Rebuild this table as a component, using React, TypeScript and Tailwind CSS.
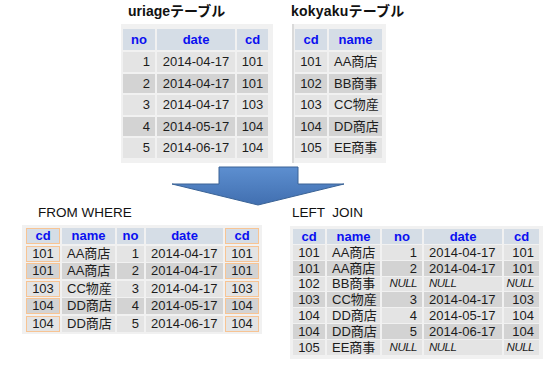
import React from "react";

type Align = "l" | "c" | "r";
type Col = { align: Align; orange?: boolean };
type TableSpec = {
  grid: string;
  gapY: string;
  headH: string;
  rowH: string;
  container: string;
  cols: Col[];
  header: string[];
  rows: string[][];
};

const justify: Record<Align, string> = {
  l: "justify-start pl-[5px]",
  c: "justify-center",
  r: "justify-end pr-[5px]",
};

function DataTable({ t }: { t: TableSpec }) {
  return (
    <div className={t.container}>
      <div className={`grid gap-x-[2px] ${t.grid} ${t.gapY}`}>
        {t.header.map((h, i) => (
          <div
            key={"h" + i}
            className={`${t.headH} flex items-center justify-center bg-[#d5dde6] text-[13px] font-bold text-[#0a10f0] ${
              t.cols[i].orange ? "border border-[#f7c494]" : ""
            }`}
          >
            {h}
          </div>
        ))}
        {t.rows.map((r, ri) =>
          r.map((v, ci) => {
            const col = t.cols[ci];
            const isNull = v === "NULL";
            return (
              <div
                key={ri + "-" + ci}
                className={`${t.rowH} flex items-center whitespace-nowrap ${
                  ri % 2 === 0 ? "bg-[#e4e4e4]" : "bg-[#d3d3d3]"
                } ${justify[col.align]} ${col.orange ? "border border-[#f7c494]" : ""} ${
                  isNull ? "italic text-[11.5px] tracking-[-0.5px]" : "text-[13px]"
                } text-[#1c1c1c]`}
              >
                {v}
              </div>
            );
          })
        )}
      </div>
    </div>
  );
}

const uriage: TableSpec = {
  grid: "grid-cols-[32px_78px_31px]",
  gapY: "gap-y-[2px]",
  headH: "h-[21px]",
  rowH: "h-[19.5px]",
  container: "bg-[#f1f1f1] pl-[2px] pr-[5px] pt-[5px] pb-[5.5px] w-fit",
  cols: [{ align: "r" }, { align: "c" }, { align: "c" }],
  header: ["no", "date", "cd"],
  rows: [
    ["1", "2014-04-17", "101"],
    ["2", "2014-04-17", "101"],
    ["3", "2014-04-17", "103"],
    ["4", "2014-05-17", "104"],
    ["5", "2014-06-17", "104"],
  ],
};

const kokyaku: TableSpec = {
  grid: "grid-cols-[32px_53px]",
  gapY: "gap-y-[2px]",
  headH: "h-[21px]",
  rowH: "h-[19.5px]",
  container:
    "bg-[#f1f1f1] border-l-[2px] border-[#dadada] pl-[1px] pr-[4px] pt-[5px] pb-[5.5px] w-fit",
  cols: [{ align: "c" }, { align: "l" }],
  header: ["cd", "name"],
  rows: [
    ["101", "AA商店"],
    ["102", "BB商事"],
    ["103", "CC物産"],
    ["104", "DD商店"],
    ["105", "EE商事"],
  ],
};

const fromWhere: TableSpec = {
  grid: "grid-cols-[34px_53px_27px_77px_34px]",
  gapY: "gap-y-[1.75px]",
  headH: "h-[16px]",
  rowH: "h-[15.75px]",
  container: "bg-[#f1f1f1] pl-[4px] pr-[3px] pt-[3px] pb-[2px] w-fit",
  cols: [
    { align: "c", orange: true },
    { align: "l" },
    { align: "r" },
    { align: "l" },
    { align: "c", orange: true },
  ],
  header: ["cd", "name", "no", "date", "cd"],
  rows: [
    ["101", "AA商店", "1", "2014-04-17", "101"],
    ["101", "AA商店", "2", "2014-04-17", "101"],
    ["103", "CC物産", "3", "2014-04-17", "103"],
    ["104", "DD商店", "4", "2014-05-17", "104"],
    ["104", "DD商店", "5", "2014-06-17", "104"],
  ],
};

const leftJoin: TableSpec = {
  grid: "grid-cols-[32px_53px_40px_78px_35px]",
  gapY: "gap-y-[1px]",
  headH: "h-[15px]",
  rowH: "h-[14.83px]",
  container: "bg-[#f1f1f1] pl-[3px] pr-[4px] pt-[3px] pb-[4px] w-fit",
  cols: [
    { align: "c" },
    { align: "l" },
    { align: "r" },
    { align: "l" },
    { align: "r" },
  ],
  header: ["cd", "name", "no", "date", "cd"],
  rows: [
    ["101", "AA商店", "1", "2014-04-17", "101"],
    ["101", "AA商店", "2", "2014-04-17", "101"],
    ["102", "BB商事", "NULL", "NULL", "NULL"],
    ["103", "CC物産", "3", "2014-04-17", "103"],
    ["104", "DD商店", "4", "2014-05-17", "104"],
    ["104", "DD商店", "5", "2014-06-17", "104"],
    ["105", "EE商事", "NULL", "NULL", "NULL"],
  ],
};

function Arrow() {
  return (
    <svg width="178" height="42" viewBox="0 0 178 42" className="overflow-visible">
      <defs>
        <linearGradient id="ag" x1="0" y1="0" x2="0" y2="1">
          <stop offset="0" stopColor="#5d8fd0" />
          <stop offset="1" stopColor="#416fb0" />
        </linearGradient>
      </defs>
      <path
        d="M49 2 H128 V19 H174 L88 40 L2 19 H49 Z"
        fill="url(#ag)"
        stroke="#3a6396"
        strokeWidth="1"
        strokeLinejoin="miter"
      />
    </svg>
  );
}

export default function App() {
  return (
    <div className="w-[549px] h-[365px] overflow-hidden bg-white font-['Liberation_Sans','Noto_Sans_CJK_JP',sans-serif] text-[#111]">
      {/* top row */}
      <div className="flex pt-[3px]">
        <div className="ml-[121px] flex flex-col">
          <div className="pl-[7px] h-[16px] text-[14px] leading-[16px] font-bold">uriageテーブル</div>
          <div className="mt-[5px]">
            <DataTable t={uriage} />
          </div>
        </div>
        <div className="ml-[19px] flex flex-col">
          <div className="-ml-[1px] h-[16px] text-[14px] leading-[16px] font-bold tracking-[0.2px]">kokyakuテーブル</div>
          <div className="mt-[5px]">
            <DataTable t={kokyaku} />
          </div>
        </div>
      </div>
      {/* arrow */}
      <div className="pl-[170px] mt-[2px] h-[40px]">
        <Arrow />
      </div>
      {/* bottom row */}
      <div className="flex">
        <div className="ml-[22px] flex flex-col">
          <div className="pl-[16px] h-[15px] text-[13.5px] leading-[15px]">FROM WHERE</div>
          <div className="mt-[5px]">
            <DataTable t={fromWhere} />
          </div>
        </div>
        <div className="ml-[28px] flex flex-col">
          <div className="pl-[2px] h-[15px] text-[13.5px] leading-[15px] whitespace-pre">LEFT  JOIN</div>
          <div className="mt-[6px]">
            <DataTable t={leftJoin} />
          </div>
        </div>
      </div>
    </div>
  );
}
